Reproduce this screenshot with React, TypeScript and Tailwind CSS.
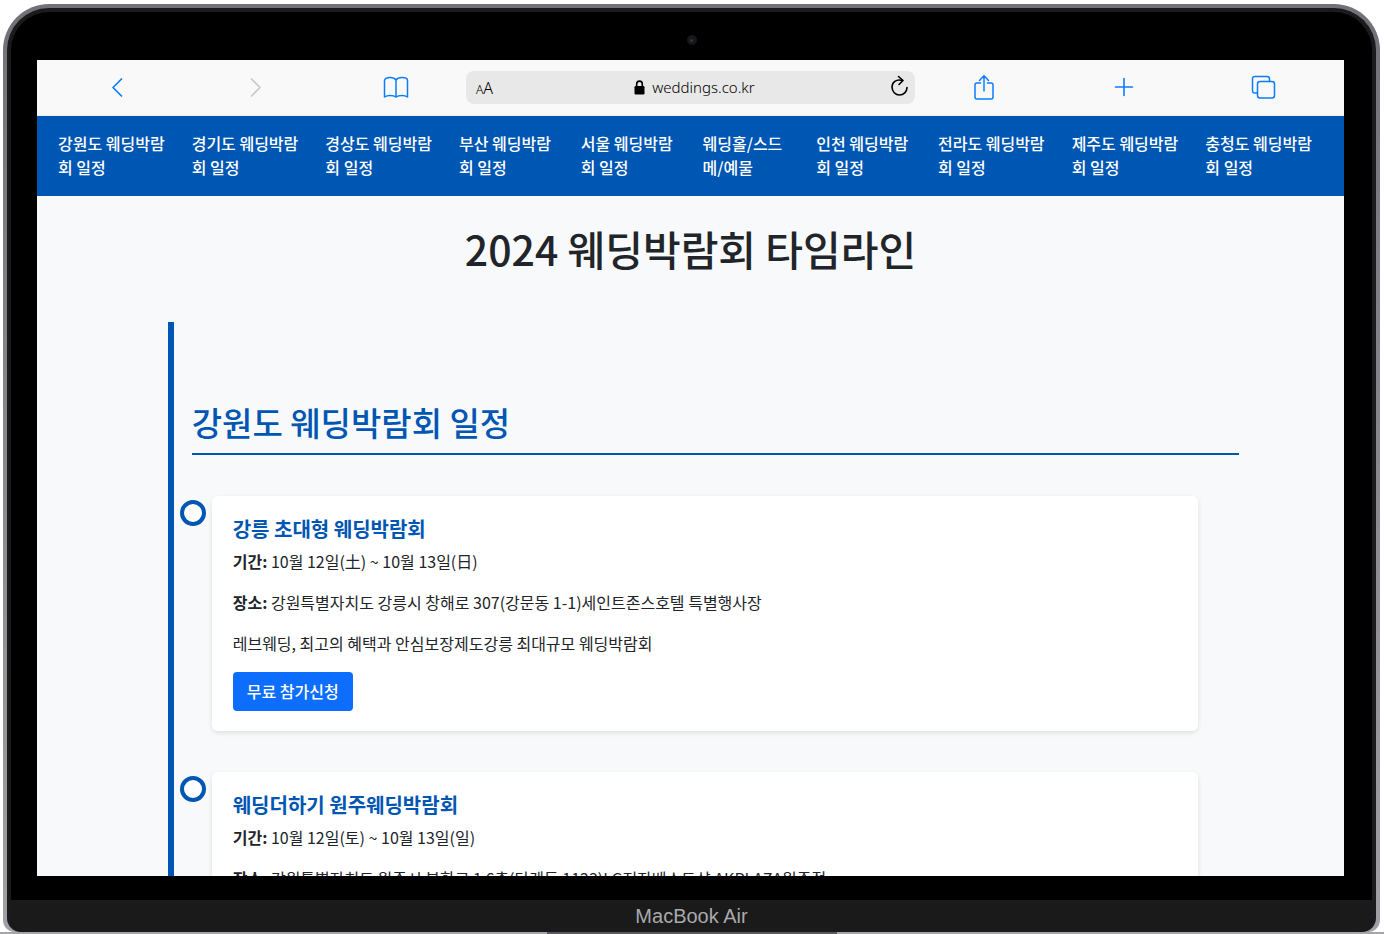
import type { ReactNode } from "react";

const regions = [
  "강원도 웨딩박람회 일정",
  "경기도 웨딩박람회 일정",
  "경상도 웨딩박람회 일정",
  "부산 웨딩박람회 일정",
  "서울 웨딩박람회 일정",
  "웨딩홀/스드메/예물",
  "인천 웨딩박람회 일정",
  "전라도 웨딩박람회 일정",
  "제주도 웨딩박람회 일정",
  "충청도 웨딩박람회 일정",
];

const events = [
  {
    title: "강릉 초대형 웨딩박람회",
    period: "10월 12일(土) ~ 10월 13일(日)",
    place: "강원특별자치도 강릉시 창해로 307(강문동 1-1)세인트존스호텔 특별행사장",
    summary: "레브웨딩, 최고의 혜택과 안심보장제도강릉 최대규모 웨딩박람회",
  },
  {
    title: "웨딩더하기 원주웨딩박람회",
    period: "10월 12일(토) ~ 10월 13일(일)",
    place: "강원특별자치도 원주시 봉화로 1 6층(단계동 1123)LG전자베스트샵 AKPLAZA원주점",
    summary: "웨딩더하기 원주웨딩박람회",
  },
];

export default function App() {
  return (
    <div className="flex h-screen flex-col overflow-hidden bg-white pt-1 font-['Noto_Sans_CJK_KR',sans-serif] text-[#212529]">
      <div className="mr-1 ml-[3px] flex min-h-0 flex-1 flex-col rounded-t-[46px] rounded-b-[12px] bg-linear-to-b from-[#717177] to-[#a0a0a5] px-1 pt-1">
        <div className="flex min-h-0 flex-1 flex-col rounded-t-[42px] rounded-b-[14px] bg-[#1b1b1e] px-1 pt-1">
          <div className="flex min-h-0 flex-1 flex-col overflow-hidden rounded-t-[38px] rounded-b-[14px] bg-black">
            <div className="flex h-12 shrink-0 items-center justify-center pt-2">
              <span className="flex size-[10px] items-center justify-center rounded-full bg-[#17171a]">
                <span className="size-[3px] rounded-full bg-[#34343c]" />
              </span>
            </div>
            <div className="mr-7 ml-[26px] flex min-h-0 flex-1 flex-col overflow-hidden bg-[#f8f9fb]">
              <BrowserBar />
              <Site />
            </div>
            <div className="mt-6 flex h-8 shrink-0 items-center justify-center bg-[#1a1a1a] font-['Liberation_Sans',sans-serif] text-[20px] leading-8 text-[#a9a9ad]">
              MacBook Air
            </div>
          </div>
        </div>
      </div>
      <div className="flex h-[2px] shrink-0 justify-center bg-[#a5a5a8]">
        <div className="w-[290px] bg-[#59595f]" />
      </div>
    </div>
  );
}

function BrowserBar() {
  return (
    <div className="grid h-14 shrink-0 grid-cols-[repeat(3,1fr)_449px_repeat(3,1fr)] items-center border-b border-[#eeeeee] bg-[#f9f9f9] px-[10px] text-[#0a7cff]">
      <ToolButton label="뒤로">
        <path d="M18.500 5L10 13.500L18.500 22" strokeWidth="1.700" />
      </ToolButton>
      <ToolButton label="앞으로">
        <path d="M9.500 5L18 13.500L9.500 22" stroke="#c9c9cb" strokeWidth="1.700" />
      </ToolButton>
      <ToolButton label="책갈피">
        <path d="M14 6C12.500 3.800 10.500 3.500 8 3.500C5 3.500 2.800 4.200 2.500 6.500V23C4.500 21.600 6.300 21.500 8 21.500C10.500 21.500 12.500 21.800 14 23M14 6C15.500 3.800 17.500 3.500 20 3.500C23 3.500 25.500 4.200 25.500 6.500V23C23.500 21.600 21.700 21.500 20 21.500C17.500 21.500 15.500 21.800 14 23M14 6V23" />
      </ToolButton>
      <div className="flex h-[33px] items-center rounded-lg bg-[#e8e8e8] pr-1.5 pl-[10px] text-black">
        <button aria-label="보기 설정" className="flex w-10 items-baseline font-['Noto_Sans',sans-serif] font-light">
          <span className="text-[12px]">A</span>
          <span className="text-base">A</span>
        </button>
        <label className="flex flex-1 items-center justify-center gap-[7px] pl-1">
          <svg width="11" height="15" viewBox="0 0 11 15" fill="none" aria-hidden="true">
            <rect x="0.500" y="6" width="10" height="8.500" rx="1.300" fill="currentColor" />
            <path d="M2.700 7V4C2.700 0.200 8.300 0.200 8.300 4V7" stroke="currentColor" strokeWidth="1.600" />
          </svg>
          <input
            aria-label="주소"
            defaultValue="weddings.co.kr"
            className="field-sizing-content bg-transparent font-['Noto_Sans',sans-serif] text-[15px] font-light outline-none"
          />
        </label>
        <button aria-label="새로고침" className="flex w-10 justify-end">
          <svg width="20" height="26" viewBox="0 0 20 26" fill="none" stroke="currentColor" strokeWidth="1.600" strokeLinecap="round" strokeLinejoin="round">
            <path d="M13.500 5.500C7 3.600 3 7.500 3 12C3 16.500 6.500 20 10.500 20C14.500 20 18 16.800 18 12.500" />
            <path d="M9.500 1.500L14 5.500L10 9.500" />
          </svg>
        </button>
      </div>
      <ToolButton label="공유">
        <path d="M9.500 9H6C4.500 9 4 9.500 4 11V23C4 24.500 4.500 25 6 25H20C21.500 25 22 24.500 22 23V11C22 9.500 21.500 9 20 9H16.500M13 17V2M8.500 6.500L13 1.800L17.500 6.500" />
      </ToolButton>
      <ToolButton label="새 탭">
        <path d="M14 4.500V21.500M5.500 13H22.500" strokeWidth="1.600" />
      </ToolButton>
      <ToolButton label="탭 보기">
        <rect x="7.500" y="7.500" width="17" height="16.500" rx="2.500" />
        <path d="M7.500 19H5C3.200 19 2.500 18.300 2.500 16.500V5C2.500 3.200 3.200 2.500 5 2.500H17C18.800 2.500 19.500 3.200 19.500 5V7.500" />
      </ToolButton>
    </div>
  );
}

function ToolButton({ label, children }: { label: string; children: ReactNode }) {
  return (
    <button aria-label={label} className="flex justify-center">
      <svg width="28" height="28" viewBox="0 0 28 28" fill="none" stroke="currentColor" strokeWidth="1.500" strokeLinecap="round" strokeLinejoin="round">
        {children}
      </svg>
    </button>
  );
}

function Site() {
  return (
    <div className="min-h-0 flex-1 overflow-hidden">
      <nav className="grid grid-cols-[134fr_134fr_134fr_122fr_122fr_114fr_122fr_134fr_134fr_134fr] bg-[#0056b3] pt-[15px] pr-[5px] pb-[17px] pl-[21px] text-base leading-6 font-medium text-white">
        {regions.map((region) => (
          <a key={region} href="#" className="pr-[18px]">
            {region}
          </a>
        ))}
      </nav>

      <h1 className="mt-7 text-center text-[41px] leading-[48px] font-medium">2024 웨딩박람회 타임라인</h1>

      <main className="mt-[50px] mr-[8%] ml-[10%] border-l-6 border-[#0056b3] pt-20 pl-[18px]">
        <h2 className="mb-[41px] border-b-2 border-[#0056b3] pb-[11px] text-[33px] leading-10 font-medium text-[#0056b3]">
          강원도 웨딩박람회 일정
        </h2>
        <ul className="mr-[41px] ml-5 space-y-[41px]">
          {events.map((event) => (
            <li key={event.title} className="relative rounded-md bg-white px-[21px] py-5 shadow-[0_2px_5px_rgba(0,0,0,0.1)]">
              <span className="absolute top-1 -left-8 size-[26px] rounded-full border-4 border-[#0056b3] bg-white" />
              <h3 className="mb-2 text-[20px] leading-[25px] font-bold text-[#0056b3]">{event.title}</h3>
              <p className="mb-4 leading-[25px]">
                <strong>기간:</strong> {event.period}
              </p>
              <p className="mb-4 leading-[25px]">
                <strong>장소:</strong> {event.place}
              </p>
              <p className="mb-4 leading-[25px]">{event.summary}</p>
              <button className="block h-[39px] rounded-sm bg-[#0d6efd] px-[14px] pb-0.5 font-medium text-white">무료 참가신청</button>
            </li>
          ))}
        </ul>
      </main>
    </div>
  );
}
